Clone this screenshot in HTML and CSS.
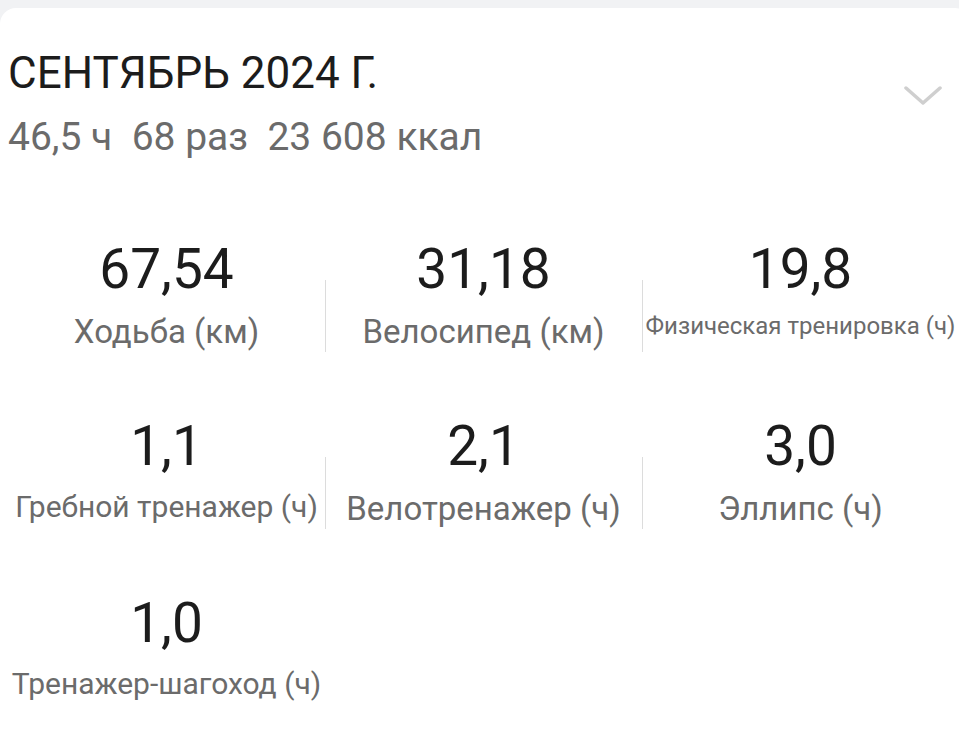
FILE: index.html
```html
<!DOCTYPE html>
<html lang="ru">
<head>
    <meta charset="UTF-8">
    <meta name="viewport" content="width=device-width, initial-scale=1.0">
    <title>Сентябрь 2024</title>
    <link rel="stylesheet" href="styles.css">
</head>
<body>
    <div class="card">
        <!-- Заголовок месяца -->
        <div class="header">
            <div class="header-text">
                <h1 class="month">СЕНТЯБРЬ 2024 Г.</h1>
                <p class="summary">46,5 ч&nbsp; 68 раз&nbsp; 23 608 ккал</p>
            </div>
            <svg class="chevron" width="38" height="22" viewBox="0 0 38 22">
                <polyline points="2,3 19,18 36,3" fill="none" stroke="#cfcfcf" stroke-width="3.5" stroke-linecap="round" stroke-linejoin="round"/>
            </svg>
        </div>

        <!-- Статистика по видам тренировок -->
        <div class="stats">
            <div class="stat">
                <div class="value">67,54</div>
                <div class="label">Ходьба (км)</div>
            </div>
            <div class="stat divided">
                <div class="value">31,18</div>
                <div class="label">Велосипед (км)</div>
            </div>
            <div class="stat divided">
                <div class="value">19,8</div>
                <div class="label label-xs">Физическая тренировка (ч)</div>
            </div>
            <div class="stat">
                <div class="value">1,1</div>
                <div class="label label-sm">Гребной тренажер (ч)</div>
            </div>
            <div class="stat divided">
                <div class="value">2,1</div>
                <div class="label">Велотренажер (ч)</div>
            </div>
            <div class="stat divided">
                <div class="value">3,0</div>
                <div class="label">Эллипс (ч)</div>
            </div>
            <div class="stat">
                <div class="value">1,0</div>
                <div class="label label-sm">Тренажер-шагоход (ч)</div>
            </div>
        </div>
    </div>
</body>
</html>
```

FILE: styles.css
```css
body {
    margin: 0;
    background-color: #f1f2f4;
    font-family: Roboto, "Noto Sans", Arial, sans-serif;
    overflow: hidden;
}

.card {
    background-color: #fff;
    margin-top: 8px;
    width: calc(100% + 12px);
    height: 740px;
    border-radius: 16px;
    padding: 39px 0 0 8px;
    box-sizing: border-box;
}

.header {
    display: flex;
    align-items: center;
    width: 951px;
}

.header-text {
    flex: 1;
}

.month {
    margin: 0;
    font-size: 44px;
    font-weight: 400;
    line-height: 52px;
    color: #1c1c1c;
}

.summary {
    margin: 14px 0 0 0;
    font-size: 39px;
    line-height: 48px;
    color: #6b6b6b;
}

.chevron {
    margin: 0 17px 16px 0;
}

.stats {
    display: grid;
    grid-template-columns: repeat(3, 317px);
    row-gap: 63px;
    margin-top: 76px;
}

.stat {
    position: relative;
    display: flex;
    flex-direction: column;
    align-items: center;
    gap: 11px;
}

/* Разделитель между колонками */
.stat.divided::before {
    content: "";
    position: absolute;
    left: 0;
    top: 43px;
    width: 1px;
    height: 72px;
    background-color: #dcdcdc;
}

.value {
    font-size: 55px;
    line-height: 64px;
    color: #1c1c1c;
}

.label {
    font-size: 33px;
    color: #6b6b6b;
    white-space: nowrap;
}

.label-sm {
    font-size: 30px;
}

.label-xs {
    font-size: 24px;
}
```
